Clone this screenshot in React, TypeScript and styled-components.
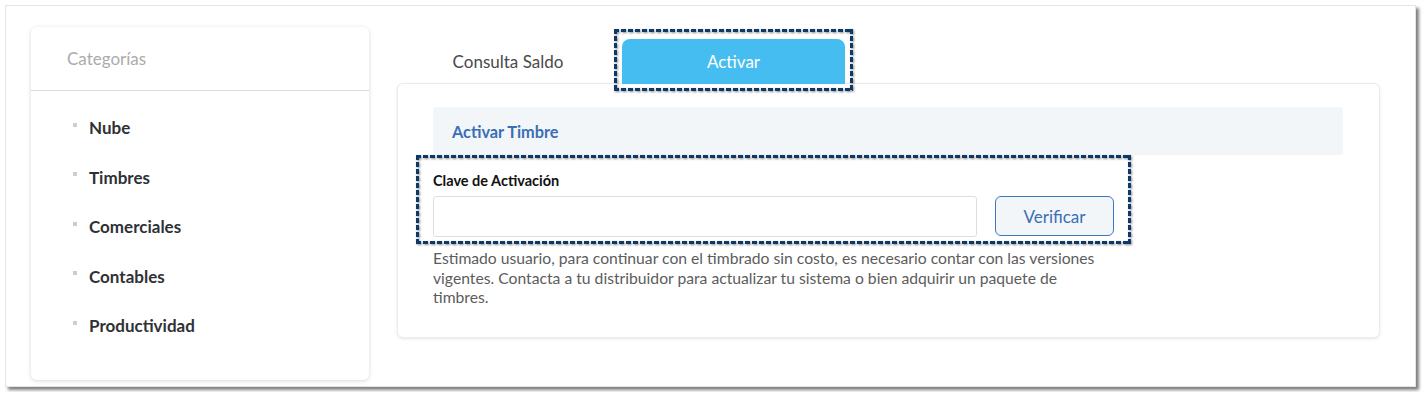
import styled, { createGlobalStyle } from 'styled-components'

const GlobalStyle = createGlobalStyle`
  html, body {
    margin: 0;
    padding: 0;
    background: #fff;
  }
  body {
    font-family: Lato, 'Open Sans', sans-serif;
  }
`

const Frame = styled.div`
  box-sizing: border-box;
  margin: 5px;
  width: 1411px;
  height: 382px;
  border: 1px solid #e4e4e4;
  background: #fff;
  box-shadow: 3px 3px 3px rgba(0, 0, 0, 0.5);
  display: flex;
  gap: 28px;
  padding: 21px 35px 6px 25px;
`

const Sidebar = styled.aside`
  box-sizing: border-box;
  width: 338px;
  flex-shrink: 0;
  background: #fff;
  border-radius: 6px;
  box-shadow: 0 1px 4px rgba(0, 0, 0, 0.16);
`

const SidebarHeader = styled.div`
  height: 63px;
  display: flex;
  align-items: center;
  padding-left: 36px;
  border-bottom: 1px solid #dcdcdc;
  color: #ababab;
  font-size: 17px;
`

const CategoryList = styled.ul`
  list-style: none;
  margin: 0;
  padding: 12px 0 0 42px;
`

const CategoryItem = styled.li`
  height: 49.5px;
  display: flex;
  align-items: center;
  gap: 12px;
  color: #2f3135;
  font-size: 17px;
  font-weight: 700;

  &::before {
    content: '';
    width: 4px;
    height: 4px;
    margin-top: -6px;
    background: #cdcdcd;
  }
`

const Main = styled.main`
  flex: 1;
  display: flex;
  flex-direction: column;
  padding-top: 12px;
`

const Tabs = styled.div`
  display: flex;
  gap: 3px;
  height: 45px;
  position: relative;
  z-index: 1;
  margin-bottom: -1px;
`

const Tab = styled.div<{ $active?: boolean }>`
  width: ${p => (p.$active ? 223 : 222)}px;
  display: flex;
  align-items: center;
  justify-content: center;
  font-size: 17px;
  border-radius: 8px 8px 0 0;
  color: ${p => (p.$active ? '#fff' : '#4a4a4a')};
  background: ${p => (p.$active ? '#45bdf0' : 'transparent')};
`

const dash = (dir: string) =>
  `repeating-linear-gradient(${dir}, #0d3969 0 5px, transparent 5px 7px)`

const Highlight = styled.div`
  position: relative;
  display: flex;
  width: fit-content;
`

const DashBox = styled.span<{ $t: number; $r: number; $b: number; $l: number }>`
  position: absolute;
  top: ${p => -p.$t}px;
  right: ${p => -p.$r}px;
  bottom: ${p => -p.$b}px;
  left: ${p => -p.$l}px;
  pointer-events: none;
  z-index: 2;
  background:
    ${dash('90deg')} top left / 100% 3px no-repeat,
    ${dash('90deg')} bottom left / 100% 3px no-repeat,
    ${dash('180deg')} top left / 3px 100% no-repeat,
    ${dash('180deg')} top right / 3px 100% no-repeat;
  filter: drop-shadow(1px 1px 1px rgba(0, 0, 0, 0.45));
`

const Card = styled.section`
  box-sizing: border-box;
  height: 255px;
  border: 1px solid #ececec;
  border-radius: 6px;
  box-shadow: 0 1px 3px rgba(0, 0, 0, 0.1);
  background: #fff;
  padding: 23px 36px 0 35px;
`

const SectionHeader = styled.div`
  height: 48px;
  display: flex;
  align-items: center;
  padding-left: 19px;
  background: #f2f6f9;
  border-radius: 3px;
  color: #3a6eb4;
  font-size: 16.3px;
  font-weight: 700;
`

const FormGroup = styled.div`
  width: 681px;
  padding-top: 16px;
`

const Label = styled.label`
  display: block;
  line-height: 20px;
  margin-bottom: 5px;
  color: #111;
  font-size: 14.5px;
  font-weight: 700;
`

const Row = styled.div`
  display: flex;
  gap: 18px;
`

const Input = styled.input`
  box-sizing: border-box;
  width: 544px;
  height: 41px;
  border: 1px solid #dedede;
  border-radius: 3px;
  outline: none;
`

const VerifyButton = styled.button`
  box-sizing: border-box;
  width: 119px;
  height: 40px;
  border: 1px solid #3b78c4;
  border-radius: 6px;
  background: #f2f6f9;
  color: #3a6eb4;
  font-family: inherit;
  font-size: 17px;
`

const Notice = styled.p`
  width: 680px;
  margin: 12px 0 0;
  color: #5c5c5c;
  font-size: 15.7px;
  line-height: 19.5px;
  font-weight: 400;
`

const categories = ['Nube', 'Timbres', 'Comerciales', 'Contables', 'Productividad']

export default function App() {
  return (
    <>
      <GlobalStyle />
      <Frame>
        <Sidebar>
          <SidebarHeader>Categorías</SidebarHeader>
          <CategoryList>
            {categories.map(c => (
              <CategoryItem key={c}>{c}</CategoryItem>
            ))}
          </CategoryList>
        </Sidebar>
        <Main>
          <Tabs>
            <Tab>Consulta Saldo</Tab>
            <Highlight>
              <Tab $active>Activar</Tab>
              <DashBox $t={10} $r={8} $b={7} $l={8} />
            </Highlight>
          </Tabs>
          <Card>
            <SectionHeader>Activar Timbre</SectionHeader>
            <Highlight>
              <FormGroup>
                <Label>Clave de Activación</Label>
                <Row>
                  <Input />
                  <VerifyButton>Verificar</VerifyButton>
                </Row>
              </FormGroup>
              <DashBox $t={0} $r={17} $b={7} $l={17} />
            </Highlight>
            <Notice>
              Estimado usuario, para continuar con el timbrado sin costo, es necesario contar con las versiones
              vigentes. Contacta a tu distribuidor para actualizar tu sistema o bien adquirir un paquete de
              timbres.
            </Notice>
          </Card>
        </Main>
      </Frame>
    </>
  )
}
